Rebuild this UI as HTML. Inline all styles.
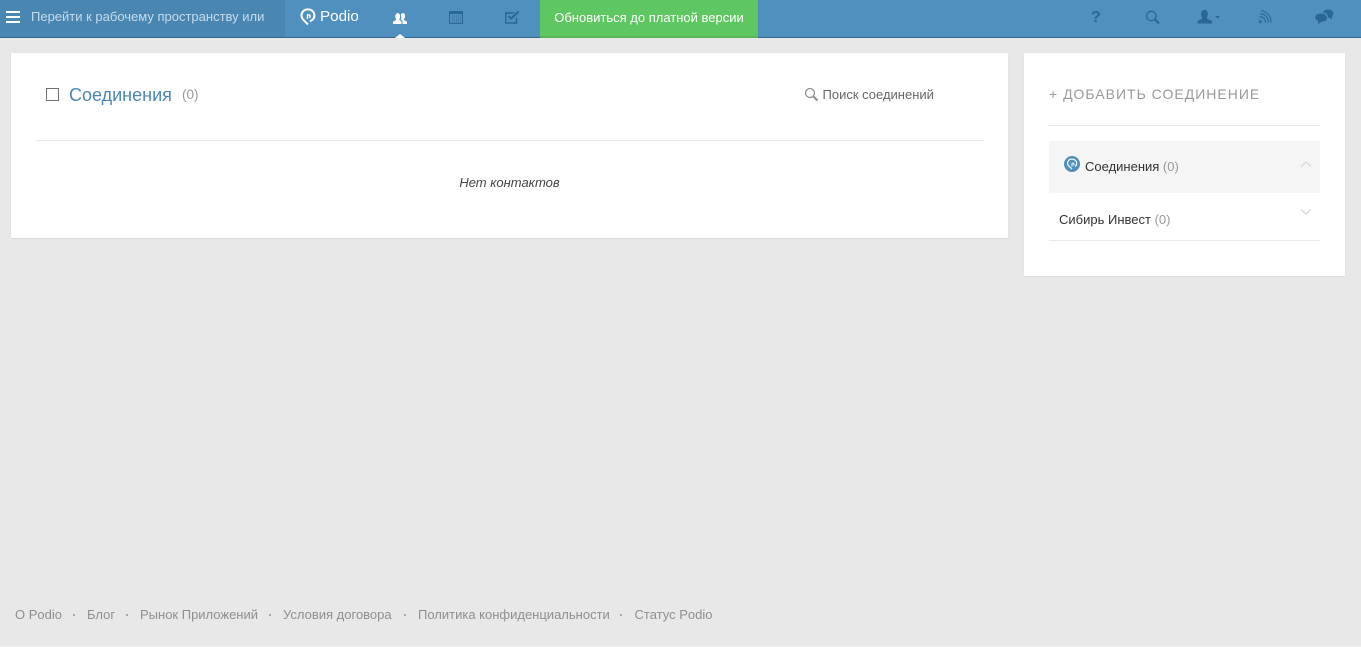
<!DOCTYPE html>
<html lang="ru">
<head>
<meta charset="utf-8">
<title>Соединения</title>
<style>
*{box-sizing:border-box}
html,body{margin:0;padding:0}
body{width:1361px;height:647px;background:#e8e8e8;position:relative;overflow:hidden;font-family:"Liberation Sans",Arial,sans-serif;font-size:13px;color:#444}
.a{position:absolute;white-space:nowrap}
svg{position:absolute;display:block}
#bar{left:0;top:0;width:1361px;height:38px;background:#4f90bf;border-bottom:1px solid #35668f}
#left{left:0;top:0;width:285px;height:37px;background:#4a86b2}
#up{left:540px;top:0;width:218px;height:38px;background:#5fc761;border-bottom:2px solid #55b557;color:#fff;font-size:13px;line-height:35px;text-align:center}
.card{background:#fff;box-shadow:0 1px 1px rgba(0,0,0,.05),0 0 1px rgba(0,0,0,.05)}
.line{height:1px;background:#e9e9e9}
.foot{top:607px;font-size:13px;line-height:15px;color:#8f8f8f}
.dot{top:614px;width:2px;height:2px;background:#a8a8a8}
.g{color:#999}
</style>
</head>
<body>
<div class="a" id="bar"></div>
<div class="a" id="left"></div>
<div class="a" style="left:6px;top:11px;width:14px;height:2px;background:#fff"></div>
<div class="a" style="left:6px;top:16px;width:14px;height:2px;background:#fff"></div>
<div class="a" style="left:6px;top:21px;width:14px;height:2px;background:#fff"></div>
<div class="a" style="left:31px;top:9px;line-height:15px;color:#c6dcec;font-size:13px">Перейти к рабочему пространству или</div>

<svg style="left:300px;top:8px" width="16" height="18" viewBox="0 0 16 18" fill="none" stroke="#fff"><path d="M8 16.500 3 11.500C1 9 1 5.500 3 3.400 5.600 .8 10 .8 12.600 3.200 15 5.600 15 9.600 12.600 11.600L10 13.500" stroke-width="2"/><path d="M7.500 11V7.500C7.500 6.300 9.500 6.300 10 7.500 10.300 8.500 10 9.300 9.500 9.800" stroke-width="1.500"/></svg>
<div class="a" style="left:320px;top:8px;font-size:15.200px;line-height:18px;color:#fff">Podio</div>

<svg style="left:393px;top:12px" width="14" height="12" viewBox="0 0 14 12" fill="#fff"><path d="M0 12V9.500L3 8V7C1.800 5.500 2 1 4.700 1S7.600 5.500 6.400 7V8L8.500 9.500V12Z"/><path d="M9.500 12V9L7.800 7.800C9 6.600 7.900 4 8 2.500 8.400.5 12 .5 12 3.500 12 5 11.700 6.300 11 7V8L14 9.500V12Z"/></svg>
<svg style="left:395px;top:34px" width="10" height="4" viewBox="0 0 10 4"><path d="M0 4 5 0 10 4Z" fill="#fff"/></svg>

<svg style="left:449px;top:10px" width="15" height="14" viewBox="0 0 15 14"><rect x=".5" y="1.500" width="13" height="12" fill="none" stroke="#2a6699" stroke-width="1"/><rect x="1" y="1" width="13" height="3" fill="#2a6699"/><path d="M3 6h9M3 8h9M3 10h9M3 12h9" stroke="#2f6c9e" stroke-width="1" stroke-dasharray="1 1"/></svg>
<svg style="left:505px;top:10px" width="15" height="14" viewBox="0 0 15 14" fill="none" stroke="#2a6699"><path d="M11.500 7.500V13H.8V3H9" stroke-width="1.500"/><path d="M3.500 6 6 8.700 13.500 1.500" stroke-width="2"/></svg>

<div class="a" id="up">Обновиться до платной версии</div>

<div class="a" style="left:1091px;top:9px;font-size:16px;line-height:18px;font-weight:bold;color:#2a6699">?</div>
<svg style="left:1145px;top:10px" width="16" height="15" viewBox="0 0 16 15" fill="none" stroke="#2a6699"><circle cx="6.300" cy="6" r="4.700" stroke-width="1.300"/><path d="M10 9.500 14 13.300" stroke-width="2.200"/></svg>
<svg style="left:1197px;top:9px" width="24" height="16" viewBox="0 0 24 16" fill="#2a6699"><path d="M.5 14.500V11.800L5 10V8.500C3.500 6.800 3.800 .8 7.500 .8S11.500 6.800 10 8.500V10L15 11.800V14.500Z"/><path d="M18 7h5l-2.500 2.500Z"/></svg>
<svg style="left:1258px;top:9px" width="15" height="15" viewBox="0 0 15 15" fill="none" stroke="#2a6699"><circle cx="2.300" cy="12.700" r="1.400" fill="#2a6699" stroke="none"/><path d="M1.500 7.700C5 7.700 7.500 10 7.500 13.500M2 4.700C7 4.700 10.300 8.500 10.300 13.500M3 1.500C9 2.500 13 7 13 13.500" stroke-width="1.100"/></svg>
<svg style="left:1315px;top:9px" width="19" height="16" viewBox="0 0 19 16" fill="#2a6699"><path d="M12 .5C15.500.2 18.300 1.500 18.300 4.500 18.300 6.200 17.800 7.500 17 8V10.500L14.700 8.800C14 8.900 13.500 8.900 13 8.800 13.500 6 11 3.700 7.800 3.500 8.500 1.800 10 .7 12 .5Z"/><path d="M6 4.500C9.400 4.500 12 6 12 8.800 12 11.600 9.400 12.800 6.500 12.700L3 15V11.800C1.200 11 .2 10 .2 8.500.2 6 3 4.500 6 4.500Z"/></svg>

<div class="a card" style="left:11px;top:53px;width:997px;height:185px"></div>
<div class="a" style="left:46px;top:88px;width:13px;height:13px;border:1px solid #707070;background:#fff"></div>
<div class="a" style="left:69px;top:85px;font-size:18px;line-height:21px;color:#4a87b8">Соединения</div>
<div class="a g" style="left:182px;top:87px;font-size:13.500px;line-height:16px">(0)</div>
<svg style="left:804px;top:87px" width="15" height="15" viewBox="0 0 15 15" fill="none" stroke="#8f8f8f"><circle cx="6" cy="6" r="4.500" stroke-width="1.300"/><path d="M9.500 9.500 13.500 13.500" stroke-width="2"/></svg>
<div class="a" style="left:822.500px;top:87px;font-size:13px;line-height:15px;color:#666">Поиск соединений</div>
<div class="a line" style="left:36px;top:140px;width:948px"></div>
<div class="a" style="left:0;top:175px;width:1019px;text-align:center;font-size:13px;line-height:15px;font-style:italic;color:#444">Нет контактов</div>

<div class="a card" style="left:1024px;top:53px;width:321px;height:223px"></div>
<div class="a" style="left:1049px;top:86px;font-size:14px;line-height:16px;letter-spacing:1px;color:#999">+ ДОБАВИТЬ СОЕДИНЕНИЕ</div>
<div class="a line" style="left:1049px;top:125px;width:271px"></div>
<div class="a" style="left:1049px;top:141px;width:271px;height:52px;background:#f5f5f5"></div>
<svg style="left:1064px;top:156px" width="16" height="16" viewBox="0 0 16 16" fill="none"><circle cx="8" cy="8" r="8" fill="#4f90bf"/><path d="M8 13 4.300 9.500C3 7.500 3.500 4.500 6 3.400 8.500 2.500 11.500 3.500 12.500 6 13 8 12.300 9.500 11 10.500" stroke="#fff" stroke-width="1.200"/><path d="M8 10.500V7.800C8 6.800 9.800 6.800 10 8 10.100 8.700 9.900 9 9.500 9.400" stroke="#fff" stroke-width="1"/></svg>
<div class="a" style="left:1085px;top:159px;font-size:13px;line-height:15px;color:#333">Соединения <span class="g">(0)</span></div>
<svg style="left:1300px;top:160px" width="12" height="8" viewBox="0 0 12 8" fill="none"><path d="M1 6.500 6 2 11 6.500" stroke="#d8d8d8" stroke-width="1.300"/></svg>
<div class="a" style="left:1059px;top:212px;font-size:13px;line-height:15px;color:#333">Сибирь Инвест <span class="g">(0)</span></div>
<svg style="left:1300px;top:208px" width="12" height="8" viewBox="0 0 12 8" fill="none"><path d="M1 1.500 6 6 11 1.500" stroke="#d8d8d8" stroke-width="1.300"/></svg>
<div class="a line" style="left:1049px;top:240px;width:271px"></div>

<div class="a foot" style="left:15px">О Podio</div>
<div class="a dot" style="left:73px"></div>
<div class="a foot" style="left:87px">Блог</div>
<div class="a dot" style="left:126px"></div>
<div class="a foot" style="left:140px">Рынок Приложений</div>
<div class="a dot" style="left:269px"></div>
<div class="a foot" style="left:283px">Условия договора</div>
<div class="a dot" style="left:404px"></div>
<div class="a foot" style="left:418px">Политика конфиденциальности</div>
<div class="a dot" style="left:620px"></div>
<div class="a foot" style="left:634.500px">Статус Podio</div>
<div class="a" style="left:0;top:646px;width:1361px;height:1px;background:#f4f4f4"></div>
</body>
</html>
